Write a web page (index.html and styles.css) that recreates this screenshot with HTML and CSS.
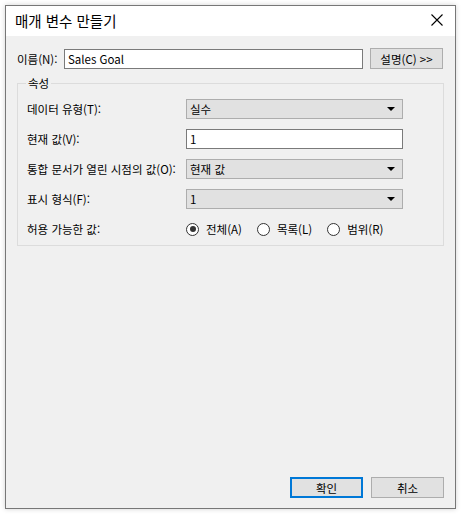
FILE: index.html
```html
<!DOCTYPE html>
<html lang="ko">
<head>
<meta charset="utf-8">
<link rel="stylesheet" href="styles.css">
</head>
<body>
<div class="window">
  <div class="titlebar">
    <span class="title">매개 변수 만들기</span>
    <svg class="close" width="12" height="12" viewBox="0 0 12 12"><path d="M0.5 0.5 L11.5 11.5 M11.5 0.5 L0.5 11.5" stroke="#000" stroke-width="1.1" fill="none"/></svg>
  </div>
  <div class="content">
    <div class="name-row">
      <span class="name-label">이름(N):</span>
      <div class="textbox name-input">Sales Goal</div>
      <div class="btn desc-btn">설명(C) &gt;&gt;</div>
    </div>
    <div class="group">
      <span class="legend">속성</span>
      <div class="grid">
        <span class="label">데이터 유형(T):</span>
        <div class="combo"><span>실수</span><span class="arrow"></span></div>
        <span class="label">현재 값(V):</span>
        <div class="textbox">1</div>
        <span class="label">통합 문서가 열린 시점의 값(O):</span>
        <div class="combo"><span>현재 값</span><span class="arrow"></span></div>
        <span class="label">표시 형식(F):</span>
        <div class="combo"><span>1</span><span class="arrow"></span></div>
        <span class="label">허용 가능한 값:</span>
        <div class="radios">
          <span class="radio checked"><span class="circle"></span>전체(A)</span>
          <span class="radio"><span class="circle"></span>목록(L)</span>
          <span class="radio"><span class="circle"></span>범위(R)</span>
        </div>
      </div>
    </div>
    <div class="spacer"></div>
    <div class="buttons">
      <div class="btn ok">확인</div>
      <div class="btn cancel">취소</div>
    </div>
  </div>
</div>
</body>
</html>
```
FILE: styles.css
```css
html, body {
  margin: 0;
  padding: 0;
  background: #ffffff;
}
body {
  padding: 5px;
  font-family: "Noto Sans CJK KR", "Noto Sans", sans-serif;
  font-size: 11.5px;
  color: #000;
}
.window {
  box-sizing: border-box;
  width: 451px;
  height: 504px;
  border: 1px solid #777777;
  background: #f0f0f0;
  display: flex;
  flex-direction: column;
  box-shadow: 0 0 5px rgba(0,0,0,0.18);
}
.titlebar {
  height: 30px;
  background: #ffffff;
  display: flex;
  align-items: center;
  padding: 0 12px 0 9px;
  flex-shrink: 0;
}
.title {
  font-size: 14.5px;
  flex: 1;
  margin-top: -2px;
}
.close {
  margin-top: -2px;
}
.content {
  flex: 1;
  display: flex;
  flex-direction: column;
  padding: 12px 11px 10px 11px;
}
.name-row {
  display: flex;
  align-items: center;
  height: 21px;
}
.name-label {
  width: 47px;
}
.textbox {
  box-sizing: border-box;
  height: 20px;
  background: #fff;
  border: 1px solid #7a7a7a;
  padding: 0 3px;
  line-height: 18px;
}
.name-input {
  width: 299px;
}
.btn {
  box-sizing: border-box;
  height: 21px;
  background: #e1e1e1;
  border: 1px solid #adadad;
  display: flex;
  align-items: center;
  justify-content: center;
}
.desc-btn {
  width: 73px;
  margin-left: 7px;
}
.group {
  position: relative;
  margin-top: 14px;
  border: 1px solid #dcdcdc;
  padding: 15px 0 6px 9px;
}
.legend {
  position: absolute;
  top: -9px;
  left: 8px;
  padding: 0 2px;
  background: #f0f0f0;
}
.grid {
  display: grid;
  grid-template-columns: 159px 217px;
  grid-auto-rows: 20px;
  row-gap: 10px;
  align-items: center;
}
.combo {
  box-sizing: border-box;
  height: 20px;
  background: #e1e1e1;
  border: 1px solid #adadad;
  display: flex;
  align-items: center;
  justify-content: space-between;
  padding: 0 7px 0 3px;
}
.arrow {
  width: 0;
  height: 0;
  border-left: 4px solid transparent;
  border-right: 4px solid transparent;
  border-top: 4px solid #000;
}
.radios {
  display: flex;
  align-items: center;
}
.radio {
  display: flex;
  align-items: center;
  margin-right: 15px;
}
.circle {
  box-sizing: border-box;
  width: 13px;
  height: 13px;
  border: 1px solid #333;
  border-radius: 50%;
  background: #fff;
  margin-right: 7px;
  position: relative;
}
.checked .circle::after {
  content: "";
  position: absolute;
  left: 2.5px;
  top: 2.5px;
  width: 6px;
  height: 6px;
  border-radius: 50%;
  background: #333;
}
.spacer {
  flex: 1;
}
.buttons {
  display: flex;
  justify-content: flex-end;
  gap: 8px;
}
.ok {
  width: 73px;
  border: 2px solid #0078d7;
}
.cancel {
  width: 73px;
}
```
